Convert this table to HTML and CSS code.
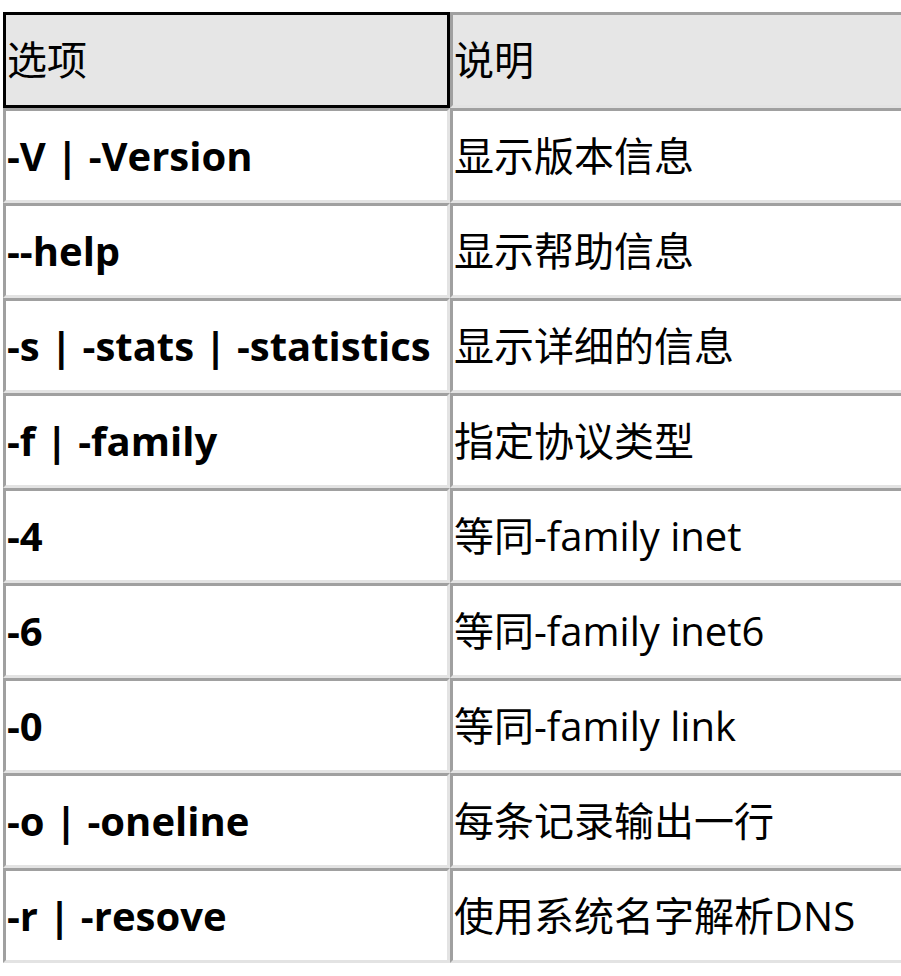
FILE: index.html
```html
<!DOCTYPE html>
<html lang="zh-CN">
<head>
<meta charset="utf-8">
<title>ip 命令选项</title>
<link rel="stylesheet" href="styles.css">
</head>
<body>
<div class="frame">
<table class="opts">
<thead>
<tr><th class="col-opt selected">选项</th><th class="col-desc">说明</th></tr>
</thead>
<tbody>
<tr><td class="opt">-V | -Version</td><td>显示版本信息</td></tr>
<tr><td class="opt">--help</td><td>显示帮助信息</td></tr>
<tr><td class="opt">-s | -stats | -statistics</td><td>显示详细的信息</td></tr>
<tr><td class="opt">-f | -family</td><td>指定协议类型</td></tr>
<tr><td class="opt">-4</td><td>等同-family inet</td></tr>
<tr><td class="opt">-6</td><td>等同-family inet6</td></tr>
<tr><td class="opt">-0</td><td>等同-family link</td></tr>
<tr><td class="opt">-o | -oneline</td><td>每条记录输出一行</td></tr>
<tr><td class="opt">-r | -resove</td><td>使用系统名字解析DNS</td></tr>
</tbody>
</table>
</div>
</body>
</html>
```
FILE: styles.css
```css
html, body {
  margin: 0;
  padding: 0;
  background: #ffffff;
  overflow: hidden;
}
body {
  padding: 12px 0 0 3px;
  font-family: "Open Sans", "Noto Sans CJK SC", sans-serif;
  color: #000;
}
.frame {
  width: 898px;
  overflow: hidden;
}
.opts {
  border-collapse: separate;
  border-spacing: 0;
  width: 904px;
  table-layout: fixed;
  font-size: 40px;
}
.opts th, .opts td {
  box-sizing: border-box;
  height: 95px;
  padding: 0 1px;
  text-align: left;
  vertical-align: middle;
  white-space: nowrap;
  font-weight: normal;
  border-style: solid;
  border-width: 3px;
  border-color: #a0a0a0 #e3e3e3 #e3e3e3 #a0a0a0;
  line-height: 1.2;
}
.opts th {
  height: 96px;
  background: #e6e6e6;
}
.opts .col-opt { width: 447px; }
.opts .selected {
  border-color: #000;
}
.opts td.opt {
  font-weight: bold;
}
```
